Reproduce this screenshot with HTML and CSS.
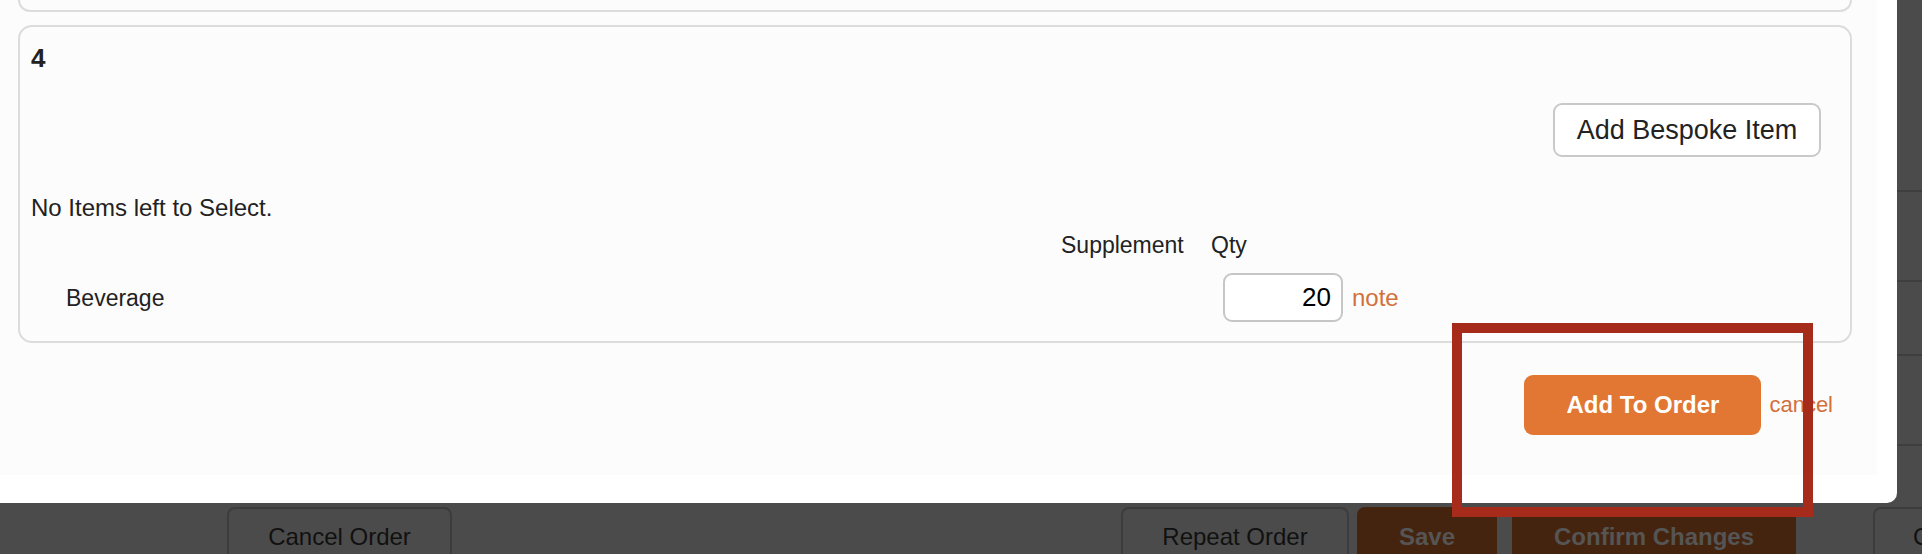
FILE: index.html
```html
<!DOCTYPE html>
<html lang="en">
  <head>
    <meta charset="UTF-8" />
    <meta name="viewport" content="width=device-width, initial-scale=1.0" />
    <title>Edit Order</title>
    <link rel="stylesheet" href="styles.css">
  </head>
  <body>
    <div class="screen">
      <!-- Add items dialog -->
      <div class="modal">
        <div class="modal-body">
          <div class="course course-prev"></div>

          <div class="course">
            <h2 class="course-title">4</h2>
            <div class="course-tools">
              <button class="btn-outline">Add Bespoke Item</button>
            </div>
            <p class="empty-msg">No Items left to Select.</p>

            <div class="item-grid item-head">
              <span></span>
              <span>Supplement</span>
              <span>Qty</span>
              <span></span>
            </div>
            <div class="item-grid item-row">
              <span class="item-name">Beverage</span>
              <span></span>
              <span><input class="qty-input" type="text" value="20"></span>
              <a class="link" href="#">note</a>
            </div>
          </div>

          <div class="modal-actions">
            <button class="btn-primary">Add To Order</button>
            <a class="link link-cancel" href="#">cancel</a>
          </div>
        </div>
      </div>

      <div class="side">
        <div class="side-row r1"></div>
        <div class="side-row r2"></div>
        <div class="side-row r3"></div>
        <div class="side-row r4"></div>
      </div>

      <!-- Page footer behind the dialog -->
      <div class="bottom-bar">
        <button class="bar-btn btn-cancel-order">Cancel Order</button>
        <button class="bar-btn btn-repeat">Repeat Order</button>
        <button class="bar-btn bar-dark btn-save">Save</button>
        <button class="bar-btn bar-dark btn-confirm">Confirm Changes</button>
        <button class="bar-btn btn-last">Close</button>
      </div>

      <div class="highlight"></div>
    </div>
  </body>
</html>
```

FILE: styles.css
```css
/* Basic page */
body {
  margin: 0;
  padding: 0;
  font-family: "Liberation Sans", Arial, sans-serif;
  background-color: #4b4b4b;
  overflow: hidden;
}
.screen {
  position: relative;
  width: 1922px;
  height: 554px;
  display: grid;
  grid-template-columns: 1897px 1fr;
  grid-template-rows: 503px 1fr;
  overflow: hidden;
}

/* Dialog */
.modal {
  background-color: #fff;
  border-bottom-right-radius: 10px;
  padding-right: 20px;
  padding-bottom: 28px;
  box-sizing: border-box;
}
.modal-body {
  background-color: #fcfcfc;
  height: 475px;
  padding: 0 25px 0 18px;
  color: #222;
  overflow: hidden;
}
.course {
  border: 2px solid #dcdcdc;
  border-radius: 14px;
  margin-top: 13px;
  padding: 16px 29px 19px 11px;
}
.course-prev {
  height: 10px;
  margin-top: 0;
  padding: 0;
  border-top: none;
  border-top-left-radius: 0;
  border-top-right-radius: 0;
}
.course-title {
  margin: 0;
  font-size: 26px;
  line-height: 30px;
  font-weight: bold;
}
.course-tools {
  display: flex;
  justify-content: flex-end;
  margin-top: 30px;
}
.btn-outline {
  font-family: inherit;
  font-size: 27px;
  color: #222;
  background-color: #fff;
  border: 2px solid #c9c9c9;
  border-radius: 9px;
  width: 268px;
  height: 54px;
  padding: 0;
}
.empty-msg {
  margin: 37px 0 0;
  font-size: 24px;
  line-height: 28px;
}

/* Items table */
.item-grid {
  display: grid;
  grid-template-columns: 1030px 150px 141px 1fr;
  align-items: center;
  font-size: 23px;
  line-height: 28px;
}
.item-head {
  margin-top: 9px;
}
.item-row {
  margin-top: 14px;
  height: 49px;
}
.item-name {
  padding-left: 35px;
}
.qty-input {
  display: block;
  margin-left: 12px;
  width: 120px;
  height: 49px;
  box-sizing: border-box;
  border: 2px solid #c6c6c6;
  border-radius: 9px;
  padding: 0 10px;
  text-align: right;
  font-family: inherit;
  font-size: 26px;
  color: #000;
  background-color: #fff;
}
.link {
  color: #d2703a;
  text-decoration: none;
  font-size: 24px;
}

/* Dialog footer */
.modal-actions {
  display: flex;
  justify-content: flex-end;
  align-items: center;
  gap: 8px;
  margin-top: 32px;
  padding-right: 19px;
}
.btn-primary {
  font-family: inherit;
  font-size: 24px;
  font-weight: bold;
  color: #fff;
  background-color: #e17732;
  border: none;
  border-radius: 9px;
  width: 237px;
  height: 60px;
  padding: 0;
}
.link-cancel {
  font-size: 22px;
}

/* Right edge of the page behind the dialog */
.side-row {
  border-bottom: 2px solid #3e3e3e;
}
.r1 { height: 190px; }
.r2 { height: 88px; }
.r3 { height: 72px; }
.r4 { height: 88px; }

/* Footer buttons */
.bottom-bar {
  grid-column: 1 / 3;
  display: flex;
  align-items: flex-start;
  padding-top: 4px;
}
.bar-btn {
  font-family: inherit;
  font-size: 24px;
  line-height: 24px;
  color: #111;
  background-color: #4b4b4b;
  border: 2px solid #3c3c3c;
  border-radius: 8px 8px 0 0;
  height: 60px;
  padding: 0;
  flex-shrink: 0;
}
.bar-dark {
  background-color: #44240f;
  border-color: #44240f;
  color: #555;
  font-weight: bold;
}
.btn-cancel-order {
  margin-left: 227px;
  width: 225px;
}
.btn-repeat {
  margin-left: 669px;
  width: 228px;
}
.btn-save {
  margin-left: 8px;
  width: 140px;
}
.btn-confirm {
  margin-left: 15px;
  width: 284px;
}
.btn-last {
  margin-left: 77px;
  width: 120px;
  text-align: left;
  padding-left: 38px;
}

/* Screenshot annotation */
.highlight {
  position: absolute;
  left: 1452px;
  top: 323px;
  width: 361px;
  height: 194px;
  box-sizing: border-box;
  border: 10px solid #a62b1a;
}
```
